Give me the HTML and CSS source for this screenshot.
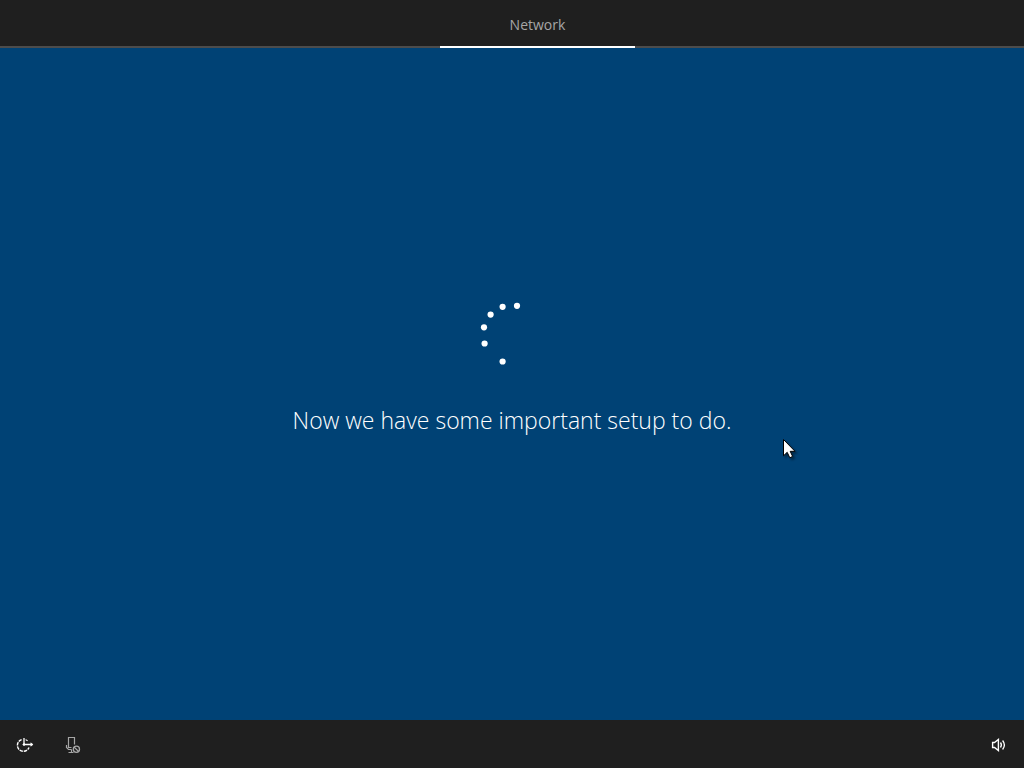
FILE: index.html
```html
<!DOCTYPE html>
<html lang="en">
<head>
    <meta charset="UTF-8">
    <meta name="viewport" content="width=device-width, initial-scale=1.0">
    <title>Network setup</title>
    <link rel="stylesheet" href="styles.css">
</head>
<body>
    <header class="top-bar">
        <h1 class="step">Network</h1>
    </header>

    <main class="content">
        <svg class="spinner" viewBox="0 0 64 64" aria-hidden="true">
            <circle cx="37" cy="3.8" r="3.1"/>
            <circle cx="22.6" cy="4.8" r="3.1"/>
            <circle cx="10.6" cy="12.6" r="3.1"/>
            <circle cx="4" cy="25.3" r="3.1"/>
            <circle cx="4.6" cy="41.5" r="3.1"/>
            <circle cx="22.6" cy="59.5" r="3.1"/>
        </svg>
        <p class="message" role="status">Now we have some important setup to do.</p>
    </main>

    <footer class="bottom-bar">
        <button type="button" class="icon-button" aria-label="Ease of access">
            <svg viewBox="0 0 18 18">
                <path d="M5.6 3.6A6 6 0 1 0 13 11.5" stroke-width="1.4" stroke-dasharray="3.4 .9"/>
                <path d="M8 2V8.5H16.5" stroke-width="1.3"/>
                <path d="M14.5 6.8L16.4 8.5L14.5 10.2M9.6 3.6L11.6 4.8" stroke-width="1.1"/>
                <path d="M6.6 8.5H9.4M8 7V10" stroke-width="1.2"/>
            </svg>
        </button>
        <button type="button" class="icon-button muted" aria-label="Microphone off">
            <svg viewBox="0 0 18 18">
                <path d="M7.5 11.5H4.5V1.5H10.5V8.5M2.5 9V11.5L4.5 13.5H7.5M7.5 13.5V16.5M4.5 16.5H9.5" stroke-width="1.2"/>
                <circle cx="12.4" cy="13.3" r="3.1" stroke-width="1.3"/>
                <path d="M10.2 11.1L14.6 15.5" stroke-width="1.3"/>
            </svg>
        </button>
        <button type="button" class="icon-button volume" aria-label="Volume">
            <svg viewBox="0 0 18 18">
                <path d="M2.6 6.5H4.5L8.4 3.5V14.5L4.5 11.5H2.6Z" stroke-width="1.4"/>
                <path d="M10.5 6.5Q12.3 9 10.5 11.5M12.6 4.5Q16.2 9 12.6 13.5" stroke-width="1.3"/>
            </svg>
        </button>
    </footer>

    <svg class="cursor" viewBox="0 0 12 19" aria-hidden="true">
        <path d="M.5 .5V16.8L4.2 13.3L6.8 18.8L9.6 17.4L7.2 12.3H12Z"/>
    </svg>
</body>
</html>
```

FILE: styles.css
```css
:root {
    --bar-color: #1f1f1f;
    --page-color: #004275;
    --line-color: #4c4c4c;
    --muted-color: #a6a6a6;
}

* {
    margin: 0;
    padding: 0;
    box-sizing: border-box;
}

body {
    position: relative;
    display: flex;
    flex-direction: column;
    min-height: 100vh;
    font-family: "Open Sans", "Noto Sans", sans-serif;
    background-color: var(--page-color);
    color: white;
}

.top-bar {
    display: flex;
    height: 48px;
    padding-left: 43%;
    background-color: var(--bar-color);
    box-shadow: inset 0 -2px var(--line-color);
}

.step {
    width: 33.3%;
    border-bottom: 2px solid white;
    color: var(--muted-color);
    font-size: 14px;
    font-weight: 400;
    line-height: 50px;
    text-align: center;
}

.content {
    flex: 1;
    display: flex;
    flex-direction: column;
    align-items: center;
    justify-content: center;
    gap: 38px;
    padding-bottom: 30px;
}

.spinner {
    width: 64px;
    height: 64px;
    fill: white;
}

.message {
    font-size: 23px;
    font-weight: 300;
    line-height: 32px;
    text-align: center;
}

.bottom-bar {
    display: flex;
    height: 48px;
    padding: 2px 1px 0;
    background-color: var(--bar-color);
}

.icon-button {
    display: flex;
    align-items: center;
    justify-content: center;
    width: 48px;
    border: none;
    background: none;
    color: white;
    cursor: pointer;
}

.icon-button svg {
    width: 18px;
    height: 18px;
    fill: none;
    stroke: currentColor;
}

.muted {
    color: var(--muted-color);
}

.volume {
    margin-left: auto;
}

/* Pointer floats over the page */
.cursor {
    position: absolute;
    left: 783px;
    top: 439px;
    width: 12px;
    height: 19px;
    overflow: visible;
    fill: white;
    stroke: black;
    filter: drop-shadow(2px 2px 1px rgba(0, 0, 0, 0.4));
    pointer-events: none;
}
```
